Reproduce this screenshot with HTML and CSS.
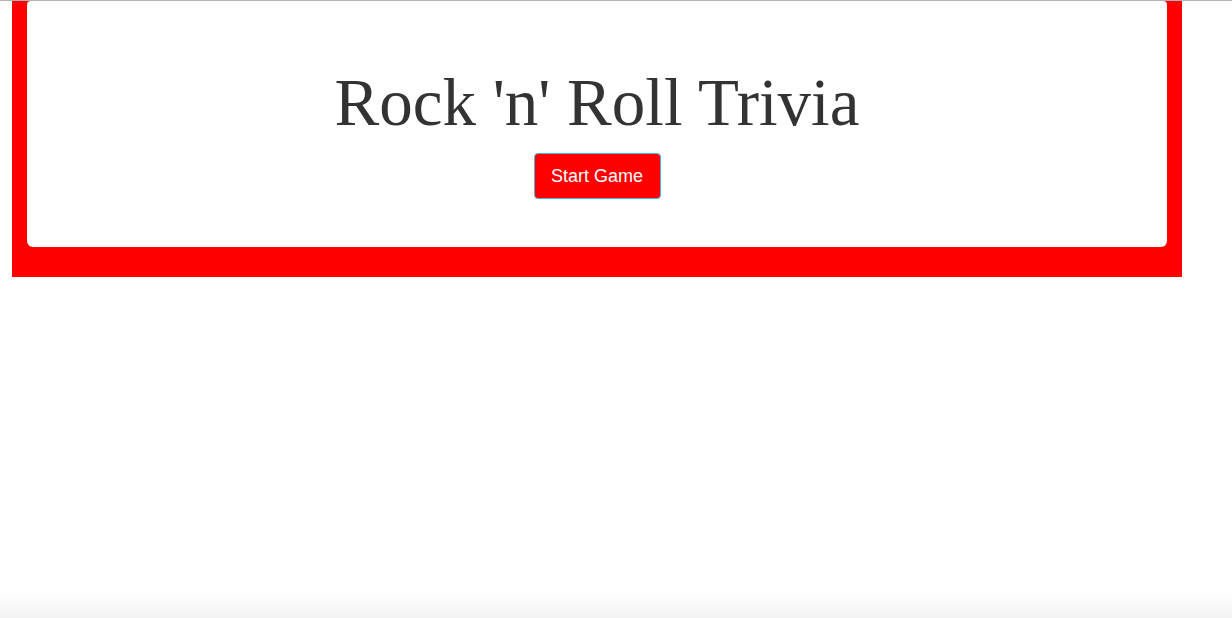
FILE: index.html
```html
<!DOCTYPE html>
<html>
<head>
<meta charset="utf-8">
<title>Rock 'n' Roll Trivia</title>
<link rel="stylesheet" href="styles.css">
</head>
<body>
<div class="topline"></div>
<div class="container">
  <div class="jumbotron">
    <h1 class="title">Rock 'n' Roll Trivia</h1>
    <button class="start-btn" type="button">Start Game</button>
  </div>
</div>
</body>
</html>
```

FILE: styles.css
```css
html {
  min-height: 100%;
  background: linear-gradient(to bottom, #ffffff calc(100% - 28px), #f3f3f3 100%);
}
body {
  margin: 0;
  font-family: "Liberation Sans", Arial, sans-serif;
}
.topline {
  height: 1px;
  background: #b3b3b3;
}
.container {
  margin-left: 12px;
  width: 1170px;
  box-sizing: border-box;
  padding: 0 15px 30px;
  background: #ff0000;
}
.jumbotron {
  background: #ffffff;
  border-radius: 4px 4px 6px 6px;
  padding: 67px 0 48px;
  text-align: center;
}
.title {
  margin: 0 0 16px;
  font-family: "Liberation Serif", Georgia, serif;
  font-weight: normal;
  font-size: 67px;
  line-height: 69px;
  color: #333333;
}
.start-btn {
  display: inline-block;
  width: 127px;
  height: 46px;
  padding: 0;
  background: #ff0000;
  color: #ffffff;
  border: 1px solid #46b8da;
  border-radius: 4px;
  font-family: "Liberation Sans", Arial, sans-serif;
  font-size: 18px;
}
```
